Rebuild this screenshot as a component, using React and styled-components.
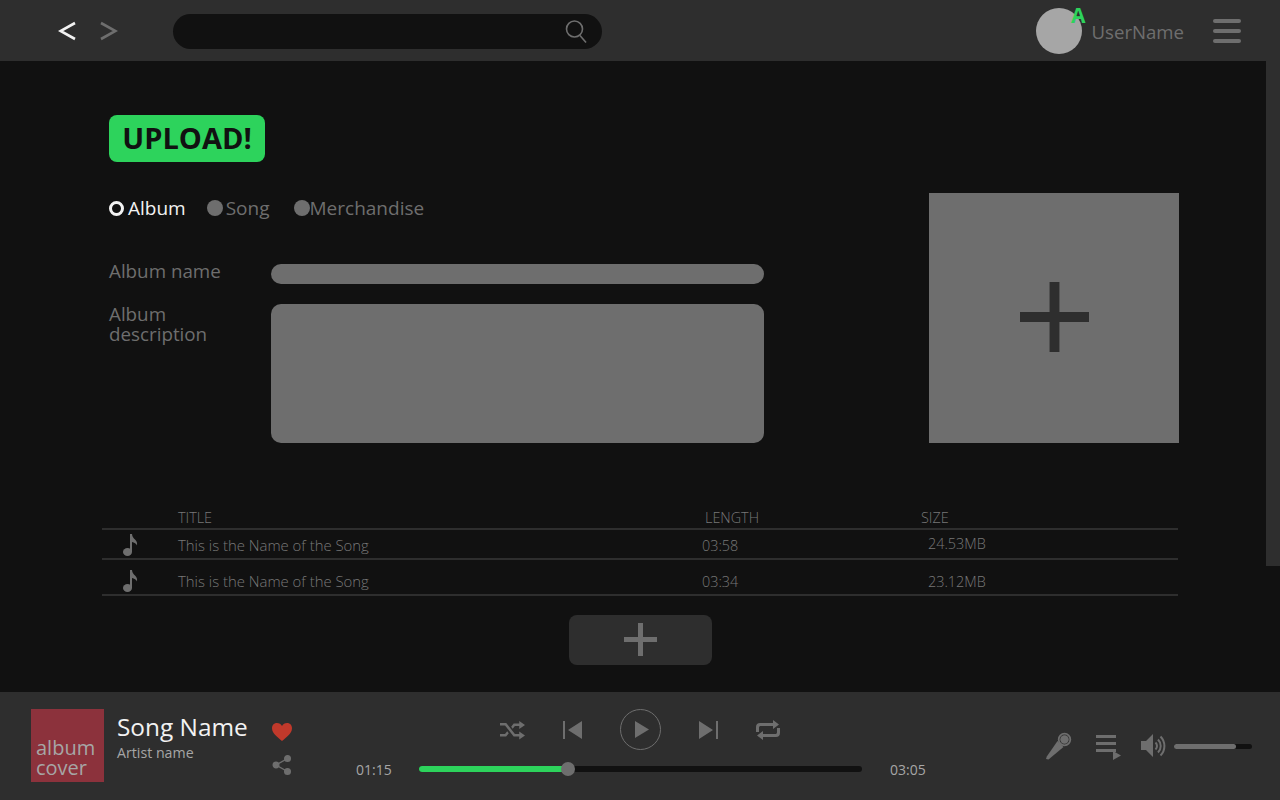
import React from "react";
import styled, { createGlobalStyle } from "styled-components";

const GlobalStyle = createGlobalStyle`
    html, body {
        margin: 0;
        padding: 0;
        background: #111111;
    }
    * {
        box-sizing: border-box;
    }
`;

const Page = styled.div`
    width: 1280px;
    height: 800px;
    display: flex;
    flex-direction: column;
    overflow: hidden;
    background: #111111;
    font-family: "Open Sans", "Noto Sans", sans-serif;
    color: #6e6e6e;
`;

const TopBar = styled.header`
    height: 61px;
    flex: none;
    display: flex;
    align-items: center;
    padding: 0 39px 0 58px;
    background: #2e2e2e;
`;

const NavButton = styled.svg`
    width: 18px;
    height: 20px;
    margin: 1px 24px 0 0;
    fill: none;
    stroke: ${(p) => (p.$active ? "#f2f2f2" : "#6e6e6e")};
    stroke-width: 2.6;
`;

const SearchBar = styled.div`
    width: 429px;
    height: 35px;
    margin: 1px 0 0 31px;
    padding-right: 15px;
    display: flex;
    align-items: center;
    justify-content: flex-end;
    background: #111111;
    border-radius: 18px;
`;

const UserArea = styled.div`
    margin-left: auto;
    display: flex;
    align-items: center;
`;

const Avatar = styled.div`
    position: relative;
    width: 46px;
    height: 46px;
    border-radius: 50%;
    background: #a6a6a6;
`;

const Badge = styled.span`
    position: absolute;
    top: -4px;
    right: -4px;
    font-size: 21px;
    line-height: 22px;
    font-weight: 700;
    color: #2dd35c;
`;

const UserName = styled.span`
    margin: 2px 29px 0 10px;
    font-size: 18.6px;
    color: #6e6e6e;
`;

const Burger = styled.div`
    width: 28px;
    display: flex;
    flex-direction: column;
    gap: 6px;
    span {
        height: 4px;
        border-radius: 2px;
        background: #6e6e6e;
    }
`;

const Main = styled.main`
    position: relative;
    flex: 1;
    padding-top: 54px;
`;

const ScrollThumb = styled.div`
    position: absolute;
    top: 0;
    right: 0;
    width: 14px;
    height: 505px;
    background: #2e2e2e;
`;

const UploadSection = styled.section`
    padding: 0 101px 0 109px;
`;

const UploadTag = styled.h1`
    width: 156px;
    height: 47px;
    margin: 0 0 31px;
    padding-bottom: 2px;
    display: flex;
    align-items: center;
    justify-content: center;
    border-radius: 8px;
    background: #2dd35c;
    color: #111111;
    font-size: 29px;
    font-weight: 700;
`;

const FormArea = styled.div`
    display: flex;
    justify-content: space-between;
`;

const FormColumn = styled.div`
    width: 655px;
`;

const RadioRow = styled.div`
    height: 30px;
    margin-bottom: 41px;
    display: flex;
    align-items: center;
`;

const RadioItem = styled.label`
    display: flex;
    align-items: center;
    gap: ${(p) => p.$gap}px;
    margin-right: ${(p) => p.$space}px;
    font-size: 19px;
    color: ${(p) => (p.$active ? "#f2f2f2" : "#6e6e6e")};
`;

const RadioDot = styled.span`
    width: ${(p) => (p.$active ? 15 : 16)}px;
    height: ${(p) => (p.$active ? 15 : 16)}px;
    border-radius: 50%;
    background: ${(p) => (p.$active ? "transparent" : "#6e6e6e")};
    border: ${(p) => (p.$active ? "3.5px solid #f2f2f2" : "none")};
`;

const FieldRow = styled.div`
    display: flex;
    margin-bottom: 20px;
`;

const FieldLabel = styled.label`
    width: 162px;
    flex: none;
    font-size: 18.8px;
    line-height: 20px;
    color: #6e6e6e;
    margin-top: ${(p) => p.$shift}px;
`;

const NameInput = styled.div`
    width: 493px;
    height: 20px;
    border-radius: 10px;
    background: #6e6e6e;
`;

const DescriptionInput = styled.div`
    width: 493px;
    height: 139px;
    border-radius: 10px;
    background: #6e6e6e;
`;

const CoverDrop = styled.div`
    width: 250px;
    height: 250px;
    display: flex;
    align-items: center;
    justify-content: center;
    padding-left: 1px;
    background: #6e6e6e;
`;

const CoverPlus = styled.svg`
    width: 69px;
    height: 70px;
    margin-top: -2px;
    fill: #2e2e2e;
`;

const SongTable = styled.section`
    margin: 47px 102px 0;
    font-weight: 300;
`;

const HeadRow = styled.div`
    display: grid;
    grid-template-columns: 76px 527px 216px 1fr;
    height: 20px;
    border-bottom: 2px solid #2e2e2e;
    font-size: 14.4px;
    line-height: 15px;
    color: #787878;
`;

const SongRow = styled.div`
    display: grid;
    grid-template-columns: 76px 524px 226px 1fr;
    align-items: center;
    height: ${(p) => p.$height}px;
    padding-top: ${(p) => p.$top}px;
    border-bottom: 2px solid #2e2e2e;
    font-size: 14.4px;
    color: #787878;
`;

const NoteCell = styled.div`
    padding-left: 20px;
    display: flex;
`;

const TitleCell = styled.span`
    font-size: 14.9px;
`;

const SizeCell = styled.div`
    padding-bottom: ${(p) => p.$lift}px;
`;

const AddRow = styled.div`
    display: flex;
    justify-content: center;
    margin-top: 19px;
    padding-left: 1px;
`;

const AddButton = styled.button`
    width: 143px;
    height: 50px;
    padding: 0 1px 2px 0;
    display: flex;
    align-items: center;
    justify-content: center;
    border: none;
    border-radius: 8px;
    background: #2e2e2e;
`;

const Player = styled.footer`
    height: 108px;
    flex: none;
    display: flex;
    background: #2e2e2e;
`;

const NowPlaying = styled.div`
    width: 356px;
    flex: none;
    display: flex;
    padding: 17px 0 0 31px;
`;

const AlbumCover = styled.div`
    width: 73px;
    height: 73px;
    flex: none;
    display: flex;
    flex-direction: column;
    justify-content: flex-end;
    padding: 0 0 4px 5px;
    background: #8c323c;
    color: #a6a6a6;
    font-size: 20px;
    line-height: 20px;
`;

const SongInfo = styled.div`
    width: 168px;
    flex: none;
    padding-left: 13px;
`;

const SongName = styled.div`
    margin-top: 1px;
    font-size: 24.4px;
    line-height: 34px;
    color: #f2f2f2;
`;

const ArtistName = styled.div`
    font-size: 14.2px;
    line-height: 18px;
    color: #a6a6a6;
`;

const SongActions = styled.div`
    display: flex;
    flex-direction: column;
    gap: 13px;
    padding-top: 13px;
`;

const Transport = styled.div`
    width: 570px;
    flex: none;
    display: flex;
    flex-direction: column;
`;

const Controls = styled.div`
    height: 76px;
    padding: 17px 0 0 144px;
    display: flex;
    align-items: flex-start;
    gap: 38px;
`;

const ControlIcon = styled.svg`
    width: ${(p) => p.$w}px;
    height: 24px;
    margin-top: 9px;
    fill: #6e6e6e;
`;

const PlayCircle = styled.div`
    width: 41px;
    height: 41px;
    display: flex;
    align-items: center;
    justify-content: center;
    padding-left: 3px;
    border: 1px solid #6e6e6e;
    border-radius: 50%;
`;

const ProgressRow = styled.div`
    display: flex;
    align-items: center;
    height: 20px;
    margin-top: -9px;
    font-size: 14px;
    color: #a6a6a6;
`;

const TimeLabel = styled.span`
    width: ${(p) => p.$width}px;
    flex: none;
`;

const Track = styled.div`
    position: relative;
    width: 443px;
    height: 6px;
    flex: none;
    margin-right: 28px;
    border-radius: 3px;
    background: #111111;
`;

const TrackFill = styled.div`
    height: 100%;
    border-radius: 3px;
    background: #2dd35c;
`;

const TrackKnob = styled.div`
    position: absolute;
    top: -4px;
    width: 14px;
    height: 14px;
    margin-left: -7px;
    border-radius: 50%;
    background: #6e6e6e;
`;

const Extras = styled.div`
    flex: 1;
    display: flex;
    align-items: center;
    padding: 0 0 0 120px;
    height: 108px;
`;

const VolumeTrack = styled.div`
    width: 78px;
    height: 5px;
    margin-left: 8px;
    border-radius: 3px;
    background: #111111;
`;

const VolumeFill = styled.div`
    height: 100%;
    border-radius: 3px;
    background: #6e6e6e;
`;

const ExtraIcon = styled.svg`
    width: ${(p) => p.$w}px;
    height: 28px;
    margin-right: ${(p) => p.$space}px;
    fill: #6e6e6e;
`;

const SearchGlyph = () => (
    <svg width="22" height="26" viewBox="0 0 22 26" fill="none" stroke="#6e6e6e" strokeWidth="1.6">
        <circle cx="9.5" cy="11" r="8" />
        <path d="M15 17.5l6 7" />
    </svg>
);

const Note = () => (
    <svg width="18" height="24" viewBox="0 0 18 24" fill="#6e6e6e">
        <ellipse cx="5.5" cy="19" rx="4.5" ry="4" />
        <path d="M8 19V1h2c.3 3 1.5 4 3 5.500 1.600 1.600 2.500 3.300 2 6-.6-2-2.800-3-5-3.500V19z" />
    </svg>
);

const Songs = [
    { id: 1, title: "This is the Name of the Song", length: "03:58", size: "24.53MB", height: 30, top: 2, lift: 3 },
    { id: 2, title: "This is the Name of the Song", length: "03:34", size: "23.12MB", height: 36, top: 8, lift: 0 }
];

export default function App() {
    return (
        <Page>
            <GlobalStyle />
            <TopBar>
                <NavButton $active viewBox="0 0 18 20">
                    <path d="M17 2L2.500 10 17 18" />
                </NavButton>
                <NavButton viewBox="0 0 18 20">
                    <path d="M1 2L15.500 10 1 18" />
                </NavButton>
                <SearchBar>
                    <SearchGlyph />
                </SearchBar>
                <UserArea>
                    <Avatar>
                        <Badge>A</Badge>
                    </Avatar>
                    <UserName>UserName</UserName>
                    <Burger>
                        <span />
                        <span />
                        <span />
                    </Burger>
                </UserArea>
            </TopBar>

            <Main>
                <ScrollThumb />
                <UploadSection>
                    <UploadTag>UPLOAD!</UploadTag>
                    <FormArea>
                        <FormColumn>
                            <RadioRow>
                                <RadioItem $active $gap={4} $space={21}>
                                    <RadioDot $active />
                                    Album
                                </RadioItem>
                                <RadioItem $gap={3} $space={24}>
                                    <RadioDot />
                                    Song
                                </RadioItem>
                                <RadioItem $gap={0} $space={0}>
                                    <RadioDot />
                                    Merchandise
                                </RadioItem>
                            </RadioRow>
                            <FieldRow>
                                <FieldLabel $shift={-3}>Album name</FieldLabel>
                                <NameInput />
                            </FieldRow>
                            <FieldRow>
                                <FieldLabel $shift={0}>
                                    Album
                                    <br />
                                    description
                                </FieldLabel>
                                <DescriptionInput />
                            </FieldRow>
                        </FormColumn>
                        <CoverDrop>
                            <CoverPlus viewBox="0 0 70 70" preserveAspectRatio="none">
                                <path d="M30 0h10v30h30v10H40v30H30V40H0V30h30z" />
                            </CoverPlus>
                        </CoverDrop>
                    </FormArea>
                </UploadSection>

                <SongTable>
                    <HeadRow>
                        <span />
                        <span>TITLE</span>
                        <span>LENGTH</span>
                        <span>SIZE</span>
                    </HeadRow>
                    {Songs.map((song) => (
                        <SongRow key={song.id} $height={song.height} $top={song.top}>
                            <NoteCell>
                                <Note />
                            </NoteCell>
                            <TitleCell>{song.title}</TitleCell>
                            <span>{song.length}</span>
                            <SizeCell $lift={song.lift}>{song.size}</SizeCell>
                        </SongRow>
                    ))}
                </SongTable>
                <AddRow>
                    <AddButton aria-label="Add song">
                        <svg width="33" height="33" viewBox="0 0 33 33" fill="#6e6e6e">
                            <path d="M14 0h5v14h14v5H19v14h-5V19H0v-5h14z" />
                        </svg>
                    </AddButton>
                </AddRow>
            </Main>

            <Player>
                <NowPlaying>
                    <AlbumCover>
                        <span>album</span>
                        <span>cover</span>
                    </AlbumCover>
                    <SongInfo>
                        <SongName>Song Name</SongName>
                        <ArtistName>Artist name</ArtistName>
                    </SongInfo>
                    <SongActions>
                        <svg width="20" height="20" viewBox="0 0 20 20" fill="#c0392b">
                            <path d="M10 19C6 15.500 0 11.500 0 6.200 0 2.800 2.500 1 5 1c2.200 0 4 1.200 5 3 1-1.800 2.800-3 5-3 2.500 0 5 1.800 5 5.200C20 11.500 14 15.500 10 19z" />
                        </svg>
                        <svg width="20" height="20" viewBox="0 0 20 20" fill="#6e6e6e" stroke="#6e6e6e" strokeWidth="1.400">
                            <circle cx="15.500" cy="3.500" r="2.800" />
                            <circle cx="4" cy="10" r="2.800" />
                            <circle cx="15.500" cy="16.500" r="2.800" />
                            <path d="M15.500 3.500L4 10l11.500 6.500" fill="none" />
                        </svg>
                    </SongActions>
                </NowPlaying>

                <Transport>
                    <Controls>
                        <ControlIcon $w={25} viewBox="0 0 26 24" preserveAspectRatio="none">
                            <path d="M0 5h6.500l9 11H20v-2.500l6 4-6 4V18.500h-5.800l-9-11H0z" />
                            <path d="M0 16h5.200l2.300-2.800 1.600 2-2.700 3.300H0zM14.200 5.500H20V3l6 4-6 4V8h-4.500l-2.300 2.800-1.600-2z" />
                        </ControlIcon>
                        <ControlIcon $w={19} viewBox="0 0 19 24">
                            <path d="M0 3h2v18H0zM19 3v18L5 12z" />
                        </ControlIcon>
                        <PlayCircle>
                            <svg width="14" height="17" viewBox="0 0 14 17" fill="#6e6e6e">
                                <path d="M0 0l14 8.500L0 17z" />
                            </svg>
                        </PlayCircle>
                        <ControlIcon $w={19} viewBox="0 0 19 24">
                            <path d="M17 3h2v18h-2zM0 3v18l14-9z" />
                        </ControlIcon>
                        <ControlIcon $w={24} viewBox="0 0 24 24">
                            <path d="M0 14V9c0-2.500 1.500-4 4-4h13V2l6 4.500-6 4.500V8H5c-1.500 0-2 .6-2 2v4zM24 10v5c0 2.500-1.500 4-4 4H7v3l-6-4.500L7 13v3h12c1.500 0 2-.6 2-2v-4z" />
                        </ControlIcon>
                    </Controls>
                    <ProgressRow>
                        <TimeLabel $width={63}>01:15</TimeLabel>
                        <Track>
                            <TrackFill style={{ width: "33.6%" }} />
                            <TrackKnob style={{ left: "33.6%" }} />
                        </Track>
                        <TimeLabel $width={40}>03:05</TimeLabel>
                    </ProgressRow>
                </Transport>

                <Extras>
                    <ExtraIcon $w={26} $space={24} viewBox="0 0 26 28">
                        <path d="M0 27l.8-2.500L11.500 9l6 6L2.500 27.500z" />
                        <circle cx="18.500" cy="7.500" r="5.800" fill="none" stroke="#6e6e6e" strokeWidth="1.800" />
                        <circle cx="18.500" cy="7.500" r="4.200" />
                    </ExtraIcon>
                    <ExtraIcon $w={25} $space={20} viewBox="0 0 25 28">
                        <path d="M0 3h20v3H0zM0 10h20v3H0zM0 17h20v3H0zM17 19l8 4.500-8 4.500z" />
                    </ExtraIcon>
                    <ExtraIcon $w={25} $space={0} viewBox="0 0 25 28">
                        <path d="M0 9h5l7-7v23l-7-7H0z" />
                        <path d="M14.500 10.500c2 2 2 5 0 7M17 7.500c3.600 3.600 3.600 9.400 0 13M19.500 4.500c5.200 5.200 5.200 13.800 0 19" fill="none" stroke="#6e6e6e" strokeWidth="2" />
                    </ExtraIcon>
                    <VolumeTrack>
                        <VolumeFill style={{ width: "80%" }} />
                    </VolumeTrack>
                </Extras>
            </Player>
        </Page>
    );
}
